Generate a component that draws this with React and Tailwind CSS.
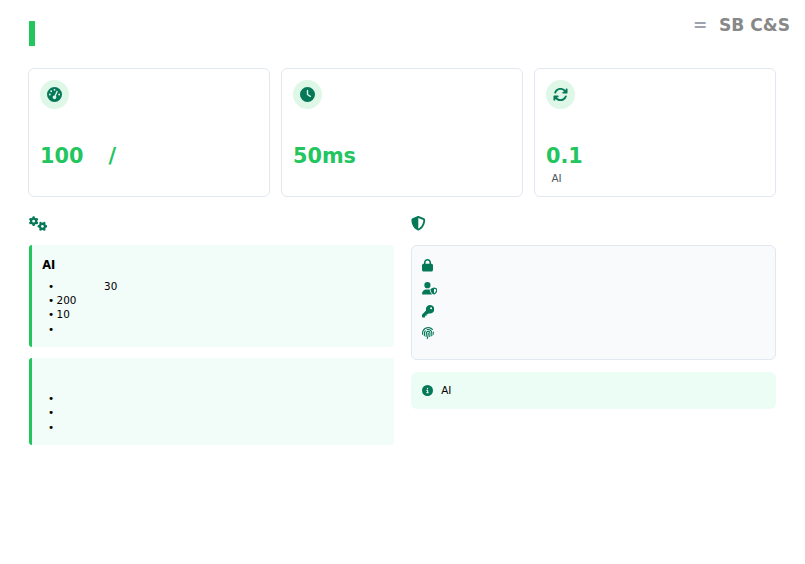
import {
  FaGaugeHigh, FaClock, FaArrowsRotate, FaGears, FaShieldHalved,
  FaLock, FaUserShield, FaKey, FaFingerprint, FaCircleInfo,
} from "react-icons/fa6";

function StatCard({ icon: Icon, value, unit, note }) {
  return (
    <div className="h-[129px] w-[242px] rounded-[6px] border border-[#e2e8f0] bg-white pl-[10.6px] pt-[10.6px]">
      <div className="flex size-[29px] items-center justify-center rounded-full bg-[#def7e7] text-[#047857]">
        <Icon size={15} />
      </div>
      <div className="mt-[36.4px] flex h-6 items-center text-[20.8px] font-bold text-[#22c55e]">
        <span>{value}</span>
        {unit && <span className="ml-[25px]">{unit}</span>}
      </div>
      {note && <div className="ml-[5.5px] mt-[2px] text-[10.4px] leading-[14px] text-[#4b5563]">{note}</div>}
    </div>
  );
}

function Bullet({ children, indent }) {
  return (
    <li className="flex h-[14.3px] items-center text-[10.4px]">
      <span className="w-[8.5px]">•</span>
      <span className={indent ? "ml-[47.5px]" : ""}>{children}</span>
    </li>
  );
}

export default function App() {
  return (
    <div className="h-[564px] w-[805px] overflow-hidden bg-white pl-[28.4px] font-['DejaVu_Sans',sans-serif] text-black">
      <header className="flex h-[68px] items-start justify-between pr-[15px]">
        <div className="ml-[0.2px] mt-[20.8px] h-[25.6px] w-[6px] bg-[#22c55e]" />
        <div className="mt-[14px] flex h-6 items-center text-[17.1px] font-bold text-[#888888]">
          <span className="mr-[11.5px] text-[#9ca3af]">=</span>
          <span>SB C&amp;S</span>
        </div>
      </header>
      <section className="flex gap-[11px]">
        <StatCard icon={FaGaugeHigh} value="100" unit="/" />
        <StatCard icon={FaClock} value="50ms" />
        <StatCard icon={FaArrowsRotate} value="0.1" note="AI" />
      </section>
      <main className="mt-[19px] flex gap-[17px] pl-[0.2px]">
        <section className="w-[365.4px]">
          <div className="flex h-[29px] items-start text-[#047857]">
            <FaGears className="h-[15px] w-[18.5px]" />
          </div>
          <div className="h-[102.4px] rounded-[3px] border-l-[3px] border-[#22c55e] bg-[#f2fcf8] pl-[10.6px] pt-[12px]">
            <h3 className="text-[11.4px] font-bold leading-[16px]">AI</h3>
            <ul className="ml-[5.9px] mt-[6.5px]">
              <Bullet indent>30</Bullet>
              <Bullet>200</Bullet>
              <Bullet>10</Bullet>
              <Bullet />
            </ul>
          </div>
          <div className="mt-[10.6px] h-[87.3px] rounded-[3px] border-l-[3px] border-[#22c55e] bg-[#f2fcf8] pl-[16.3px] pt-[33.8px]">
            <ul>
              <Bullet />
              <Bullet />
              <Bullet />
            </ul>
          </div>
        </section>
        <section className="w-[365.4px]">
          <div className="flex h-[29px] items-start text-[#047857]">
            <FaShieldHalved size={14.6} />
          </div>
          <div className="h-[115px] rounded-[6px] border border-[#e2e8f0] bg-[#f8fafc] pl-[10px] pt-[8.2px] text-[#047857]">
            <div className="flex h-[23px] items-center"><FaLock className="h-[12.5px] w-[11px]" /></div>
            <div className="flex h-[23px] items-center"><FaUserShield className="h-[12.5px] w-[15.5px]" /></div>
            <div className="flex h-[23px] items-center"><FaKey size={12.4} /></div>
            <div className="flex h-[21px] items-center"><FaFingerprint size={12.4} /></div>
          </div>
          <div className="mt-[12px] flex h-[37px] items-center rounded-[6px] bg-[#ecfdf5] pl-[11px] text-[10.4px]">
            <FaCircleInfo size={11} className="text-[#047857]" />
            <span className="ml-[8.2px]">AI</span>
          </div>
        </section>
      </main>
    </div>
  );
}
